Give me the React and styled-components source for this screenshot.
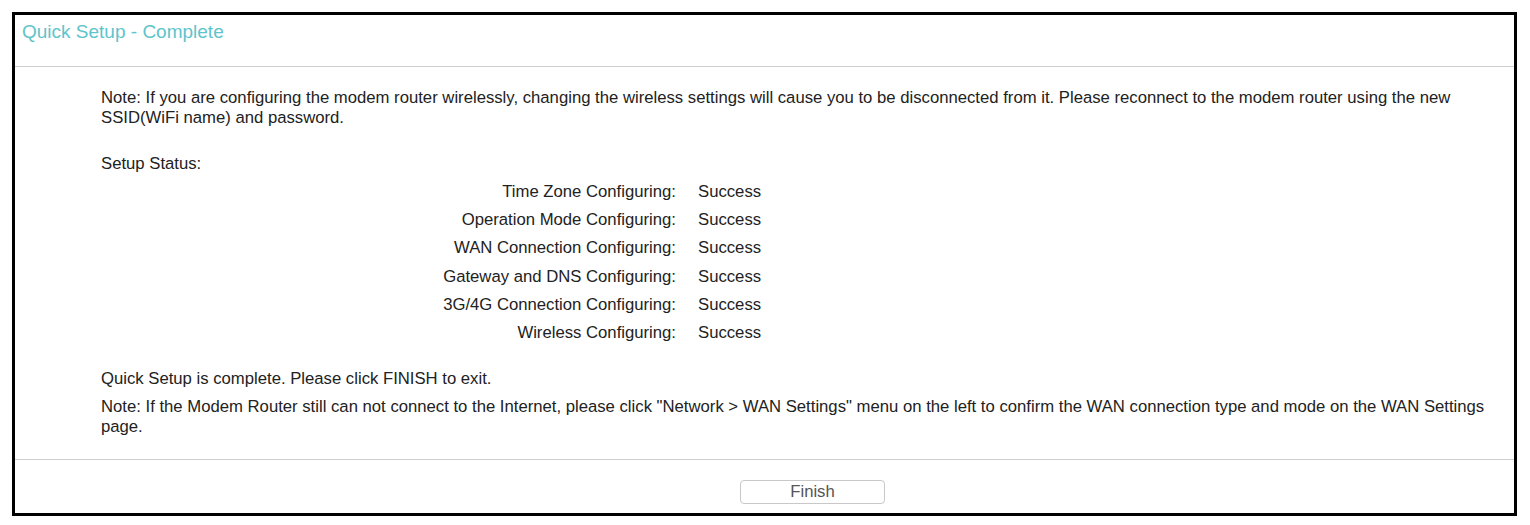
import styled, { createGlobalStyle } from "styled-components";

const Global = createGlobalStyle`
  html, body { margin: 0; padding: 0; background: #fff; }
  body { font-family: "Liberation Sans", Arial, sans-serif; }
`;

const steps = [
  "Time Zone Configuring:",
  "Operation Mode Configuring:",
  "WAN Connection Configuring:",
  "Gateway and DNS Configuring:",
  "3G/4G Connection Configuring:",
  "Wireless Configuring:",
];

export default function App() {
  return (
    <Page>
      <Global />
      <Panel>
        <Header>
          <Title>Quick Setup - Complete</Title>
        </Header>
        <Body>
          <Text>
            Note: If you are configuring the modem router wirelessly, changing the wireless settings will cause you to be
            disconnected from it. Please reconnect to the modem router using the new SSID(WiFi name) and password.
          </Text>
          <Label>Setup Status:</Label>
          <StatusGrid>
            {steps.map((s) => (
              <Row key={s}>
                <Key>{s}</Key>
                <Value>Success</Value>
              </Row>
            ))}
          </StatusGrid>
          <Text>Quick Setup is complete. Please click FINISH to exit.</Text>
          <Text $top={8}>
            Note: If the Modem Router still can not connect to the Internet, please click "Network &gt; WAN Settings" menu on
            the left to confirm the WAN connection type and mode on the WAN Settings page.
          </Text>
        </Body>
        <Footer>
          <Button>Finish</Button>
        </Footer>
      </Panel>
    </Page>
  );
}

const Page = styled.div`
  padding: 12px 13px 9px 12px;
  width: 1530px;
  height: 525px;
  box-sizing: border-box;
`;

const Panel = styled.div`
  border: 3px solid #000;
  height: 504px;
  box-sizing: border-box;
  display: flex;
  flex-direction: column;
`;

const Header = styled.div`
  height: 52px;
  border-bottom: 1px solid #cfcfcf;
  padding-left: 7px;
  display: flex;
  align-items: center;
  padding-bottom: 17px;
  box-sizing: border-box;
`;

const Title = styled.h1`
  margin: 0;
  font-weight: normal;
  font-size: 19px;
  color: #5ec4cc;
`;

const Body = styled.div`
  flex: 1;
  padding: 21px 12px 22px 86px;
  font-size: 16.7px;
  line-height: 20px;
  color: #222;
`;

const Text = styled.p`
  margin: ${(p) => p.$top || 0}px 0 0;
`;

const Label = styled.p`
  margin: 26px 0 4px;
`;

const StatusGrid = styled.div`
  display: flex;
  flex-direction: column;
  margin-bottom: 22px;
`;

const Row = styled.div`
  display: grid;
  grid-template-columns: 575px auto;
  column-gap: 22px;
  line-height: 28.2px;
`;

const Key = styled.span`
  text-align: right;
`;

const Value = styled.span``;

const Footer = styled.div`
  height: 54px;
  border-top: 1px solid #cfcfcf;
  box-sizing: border-box;
  display: flex;
  justify-content: center;
  align-items: center;
  padding-left: 96px;
  padding-top: 10px;
`;

const Button = styled.button`
  width: 145px;
  height: 24px;
  border: 1px solid #c8c8c8;
  border-radius: 4px;
  background: #fff;
  font-family: "Liberation Sans", Arial, sans-serif;
  font-size: 16.7px;
  color: #555;
  padding: 0;
`;
